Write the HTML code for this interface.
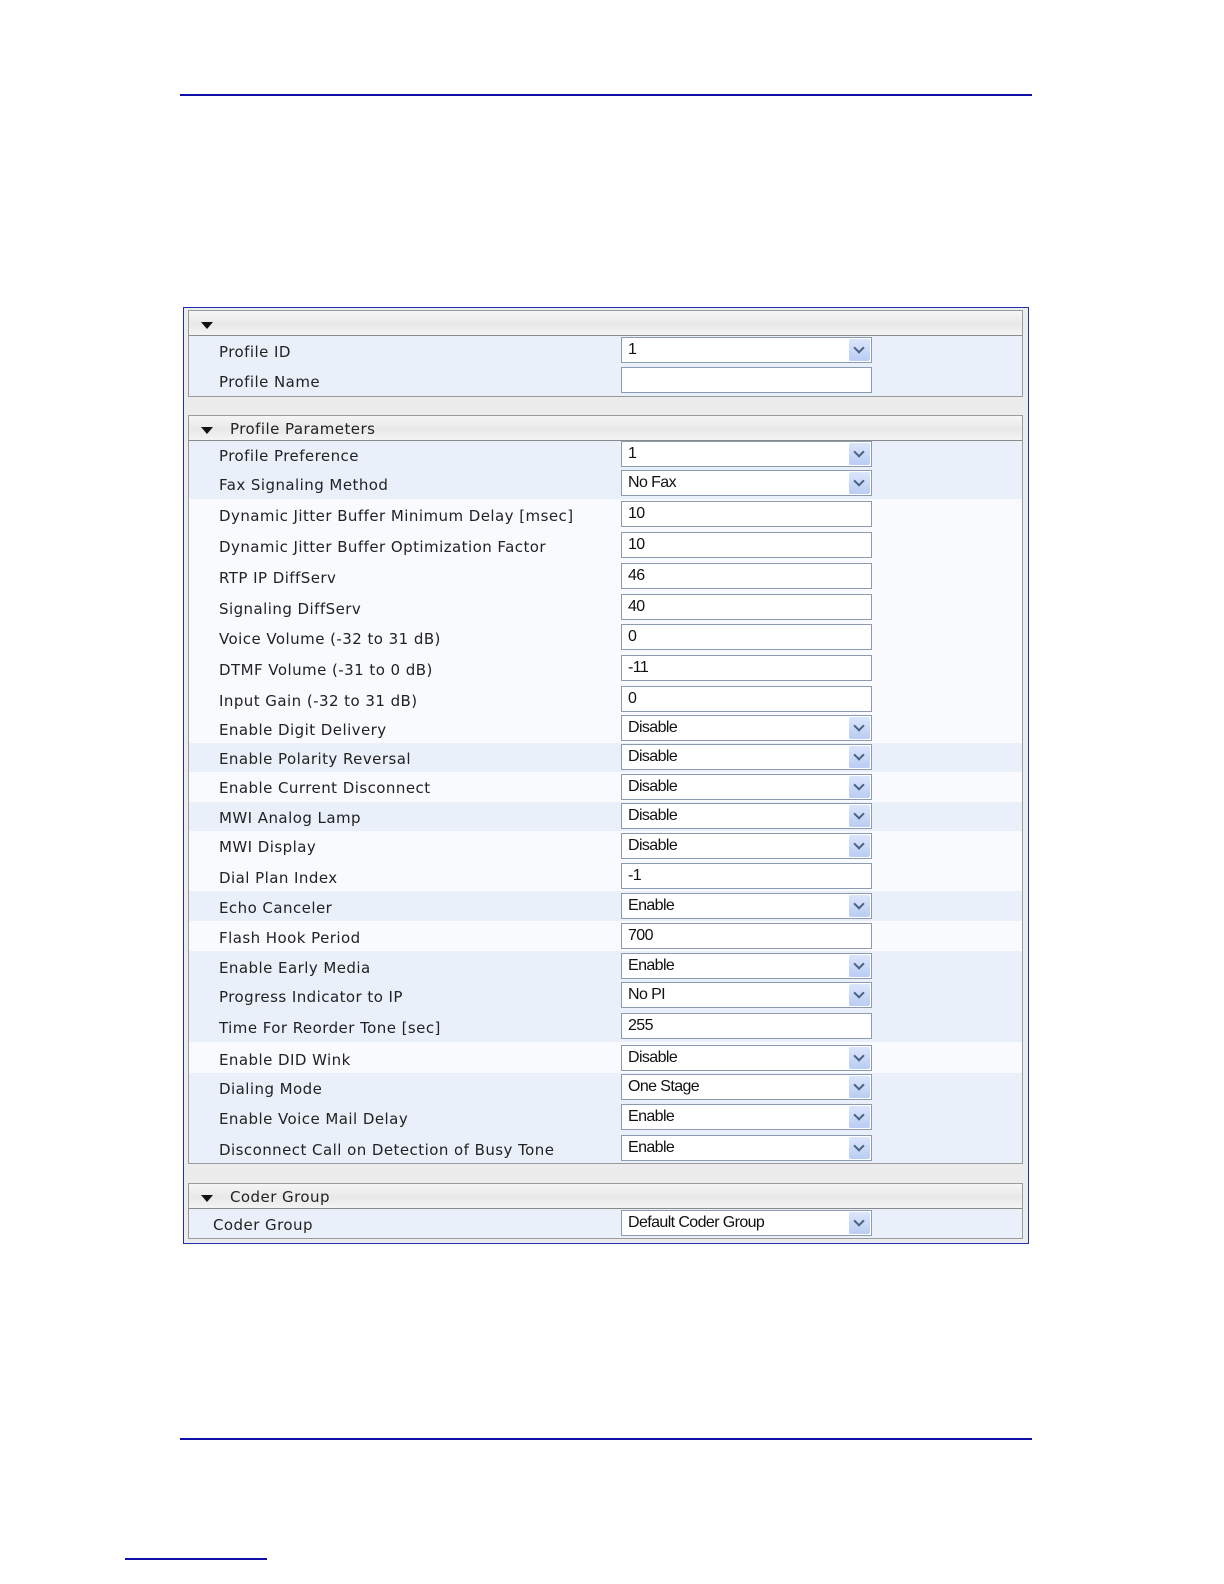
<!DOCTYPE html>
<html><head><meta charset="utf-8"><style>
*{margin:0;padding:0;box-sizing:border-box}
body{width:1224px;height:1584px;background:#fff;position:relative;font-family:"DejaVu Sans",Verdana,sans-serif;overflow:hidden}
.a{position:absolute}
.hl{position:absolute;background:#1010a8}
.hdr{position:absolute;left:188px;width:835px;border:1px solid #9a9a9a;border-bottom:1px solid #8a8a8a;background:linear-gradient(#f6f6f6,#e8e8e8 55%,#f4f4f4);font-size:15px;letter-spacing:0.45px;color:#222}
.tri{position:absolute;left:12px;width:0;height:0;border-left:6px solid transparent;border-right:6px solid transparent;border-top:7px solid #111}
.row{position:absolute;left:189px;width:833px}
.lbl{position:absolute;left:30px;font-size:15px;color:#222;letter-spacing:0.45px;white-space:nowrap;margin-top:2px}
.box{position:absolute;left:432px;width:251px;height:26px;background:#fff;border:1px solid #8d9bb0;font-family:"Liberation Sans",Arial,sans-serif;font-size:16px;letter-spacing:-0.6px;color:#111;padding-left:6px;line-height:24px;white-space:nowrap}
.dd{position:absolute;right:1px;top:1px;width:21px;height:22px;background:linear-gradient(#dbe6fb,#b9cdf3);border-radius:2px}
.dd:after{content:"";position:absolute;left:6px;top:5px;width:6px;height:6px;border-right:2.5px solid #4d6185;border-bottom:2.5px solid #4d6185;transform:rotate(45deg)}
.panel{position:absolute;left:188px;width:835px;border:1px solid #9a9a9a}
</style></head><body>
<div class="hl" style="left:180px;top:94px;width:852px;height:2px"></div>
<div class="hl" style="left:180px;top:1438px;width:852px;height:2px"></div>
<div class="hl" style="left:125px;top:1558px;width:142px;height:2px"></div>

<div class="a" style="left:183px;top:307px;width:846px;height:937px;border:1px solid #2030b0;background:#ececec"></div>

<div class="panel" style="top:335px;height:62px;background:#eaf0fa"></div>
<div class="hdr" style="top:310px;height:26px"><div class="tri" style="top:11px"></div></div>
<div class="row" style="top:336px;height:30px;background:#eaf0fa"><div class="lbl" style="top:5px">Profile ID</div><div class="box" style="top:1px">1<div class="dd"></div></div></div>
<div class="row" style="top:366px;height:30px;background:#eaf0fa"><div class="lbl" style="top:5px">Profile Name</div><div class="box" style="top:1px"></div></div>

<div class="panel" style="top:440px;height:724px;background:#f8fafe"></div>
<div class="hdr" style="top:415px;height:26px"><div class="tri" style="top:11px"></div><div style="position:absolute;left:41px;top:4px">Profile Parameters</div></div>

<div class="panel" style="top:1208px;height:31px;background:#eaf0fa"></div>
<div class="hdr" style="top:1183px;height:26px"><div class="tri" style="top:11px"></div><div style="position:absolute;left:41px;top:4px">Coder Group</div></div>
<div class="row" style="top:1209px;height:29px;background:#eaf0fa"><div class="lbl" style="top:5px;left:24px">Coder Group</div><div class="box" style="top:1px">Default Coder Group<div class="dd"></div></div></div>

<div class="row" style="top:441px;height:28px;background:#eaf0fa"><div class="lbl" style="top:4px">Profile Preference</div><div class="box" style="top:0px">1<div class="dd"></div></div></div>
<div class="row" style="top:469px;height:30px;background:#eaf0fa"><div class="lbl" style="top:5px">Fax Signaling Method</div><div class="box" style="top:1px">No Fax<div class="dd"></div></div></div>
<div class="row" style="top:499px;height:31px"><div class="lbl" style="top:6px">Dynamic Jitter Buffer Minimum Delay [msec]</div><div class="box" style="top:2px">10</div></div>
<div class="row" style="top:530px;height:31px"><div class="lbl" style="top:6px">Dynamic Jitter Buffer Optimization Factor</div><div class="box" style="top:2px">10</div></div>
<div class="row" style="top:561px;height:31px"><div class="lbl" style="top:6px">RTP IP DiffServ</div><div class="box" style="top:2px">46</div></div>
<div class="row" style="top:592px;height:30px"><div class="lbl" style="top:6px">Signaling DiffServ</div><div class="box" style="top:2px">40</div></div>
<div class="row" style="top:622px;height:31px"><div class="lbl" style="top:6px">Voice Volume (-32 to 31 dB)</div><div class="box" style="top:2px">0</div></div>
<div class="row" style="top:653px;height:31px"><div class="lbl" style="top:6px">DTMF Volume (-31 to 0 dB)</div><div class="box" style="top:2px">-11</div></div>
<div class="row" style="top:684px;height:30px"><div class="lbl" style="top:6px">Input Gain (-32 to 31 dB)</div><div class="box" style="top:2px">0</div></div>
<div class="row" style="top:714px;height:29px"><div class="lbl" style="top:5px">Enable Digit Delivery</div><div class="box" style="top:1px">Disable<div class="dd"></div></div></div>
<div class="row" style="top:743px;height:29px;background:#eaf0fa"><div class="lbl" style="top:5px">Enable Polarity Reversal</div><div class="box" style="top:1px">Disable<div class="dd"></div></div></div>
<div class="row" style="top:772px;height:30px"><div class="lbl" style="top:5px">Enable Current Disconnect</div><div class="box" style="top:2px">Disable<div class="dd"></div></div></div>
<div class="row" style="top:802px;height:29px;background:#eaf0fa"><div class="lbl" style="top:5px">MWI Analog Lamp</div><div class="box" style="top:1px">Disable<div class="dd"></div></div></div>
<div class="row" style="top:831px;height:30px"><div class="lbl" style="top:5px">MWI Display</div><div class="box" style="top:2px">Disable<div class="dd"></div></div></div>
<div class="row" style="top:861px;height:30px"><div class="lbl" style="top:6px">Dial Plan Index</div><div class="box" style="top:2px">-1</div></div>
<div class="row" style="top:891px;height:30px;background:#eaf0fa"><div class="lbl" style="top:6px">Echo Canceler</div><div class="box" style="top:2px">Enable<div class="dd"></div></div></div>
<div class="row" style="top:921px;height:30px"><div class="lbl" style="top:6px">Flash Hook Period</div><div class="box" style="top:2px">700</div></div>
<div class="row" style="top:951px;height:30px;background:#eaf0fa"><div class="lbl" style="top:6px">Enable Early Media</div><div class="box" style="top:2px">Enable<div class="dd"></div></div></div>
<div class="row" style="top:981px;height:30px;background:#eaf0fa"><div class="lbl" style="top:5px">Progress Indicator to IP</div><div class="box" style="top:1px">No PI<div class="dd"></div></div></div>
<div class="row" style="top:1011px;height:31px;background:#eaf0fa"><div class="lbl" style="top:6px">Time For Reorder Tone [sec]</div><div class="box" style="top:2px">255</div></div>
<div class="row" style="top:1042px;height:31px"><div class="lbl" style="top:7px">Enable DID Wink</div><div class="box" style="top:3px">Disable<div class="dd"></div></div></div>
<div class="row" style="top:1073px;height:29px;background:#eaf0fa"><div class="lbl" style="top:5px">Dialing Mode</div><div class="box" style="top:1px">One Stage<div class="dd"></div></div></div>
<div class="row" style="top:1102px;height:31px;background:#eaf0fa"><div class="lbl" style="top:6px">Enable Voice Mail Delay</div><div class="box" style="top:2px">Enable<div class="dd"></div></div></div>
<div class="row" style="top:1133px;height:30px;background:#eaf0fa"><div class="lbl" style="top:6px">Disconnect Call on Detection of Busy Tone</div><div class="box" style="top:2px">Enable<div class="dd"></div></div></div>
</body></html>
